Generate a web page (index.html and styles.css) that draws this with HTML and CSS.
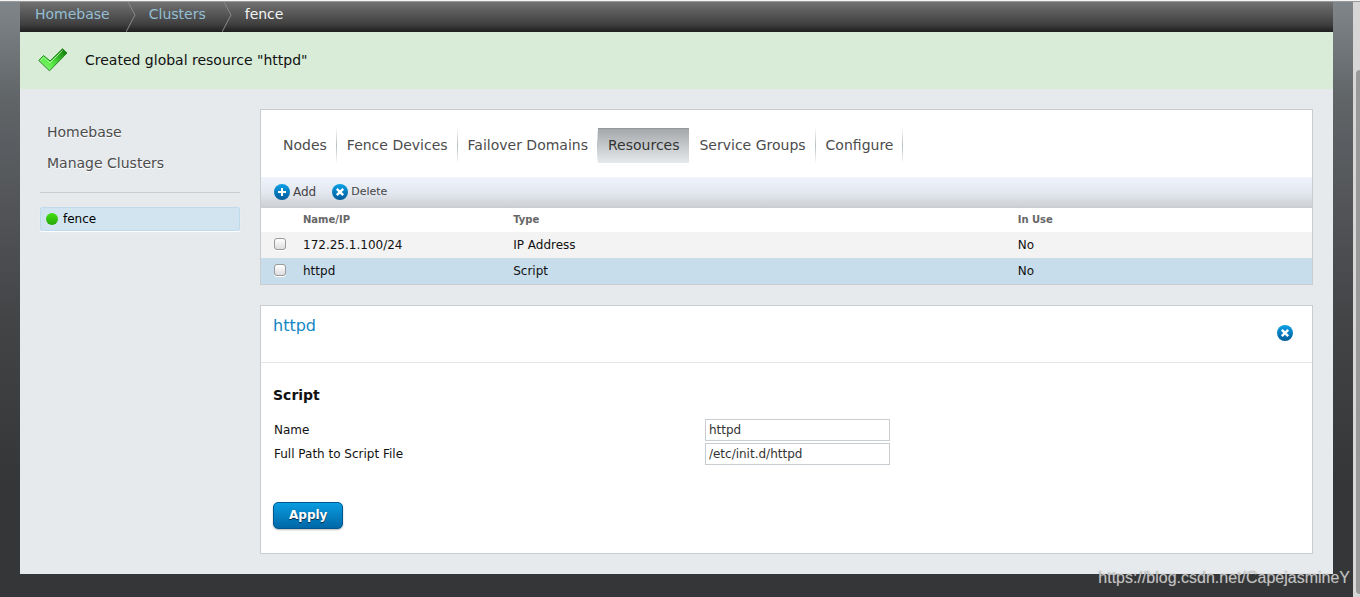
FILE: index.html
```html
<!DOCTYPE html>
<html lang="en">
<head>
<meta charset="utf-8">
<title>fence - Resources</title>
<link rel="stylesheet" href="styles.css">
</head>
<body>
<svg class="defs" width="0" height="0" aria-hidden="true">
  <defs>
    <linearGradient id="blue" x1="0" y1="0" x2="0" y2="1"><stop offset="0" stop-color="#0ba1e6"/><stop offset="1" stop-color="#015a98"/></linearGradient>
    <linearGradient id="green" x1="1" y1="0" x2="0" y2="1"><stop offset="0" stop-color="#0b6a08"/><stop offset=".3" stop-color="#2fae22"/><stop offset=".65" stop-color="#5df04a"/><stop offset="1" stop-color="#a5e89b"/></linearGradient>
    <symbol id="delete" viewBox="0 0 16 16"><circle cx="8" cy="8" r="8" fill="url(#blue)"/><path d="M4.8 4.8l6.4 6.4M11.2 4.8l-6.4 6.4" stroke="#fff" stroke-width="2.4"/></symbol>
    <symbol id="add" viewBox="0 0 16 16"><circle cx="8" cy="8" r="8" fill="url(#blue)"/><path d="M8 4v8M4 8h8" stroke="#fff" stroke-width="2"/></symbol>
  </defs>
</svg>
<div class="window">
  <div class="page">
    <nav class="crumbs" aria-label="Breadcrumb">
      <a href="#">Homebase</a>
      <svg class="chevron" viewBox="0 0 10 30"><path d="M2 0L9 13L0 30" fill="none" stroke="#8a8a8a"/></svg>
      <a href="#">Clusters</a>
      <svg class="chevron" viewBox="0 0 10 30"><path d="M2 0L9 13L0 30" fill="none" stroke="#8a8a8a"/></svg>
      <span>fence</span>
    </nav>
    <div class="notice" role="status">
      <svg class="check" viewBox="0 0 30 24"><path d="M0.8 12.5L5.5 7.5L12 13L24.5 0.8L29 5L11.5 22.8Z" fill="url(#green)" stroke="#248a1c"/><path d="M2.5 12.5L5.5 9.3L12 15L24.5 2.5" fill="none" stroke="#c5f5bd" stroke-width="1" opacity=".8"/></svg>
      <span>Created global resource "httpd"</span>
    </div>
    <div class="columns">
      <aside class="side">
        <nav class="side-links"><a href="#">Homebase</a><a href="#">Manage Clusters</a></nav>
        <a class="cluster" href="#"><i class="dot"></i>fence</a>
      </aside>
      <main class="main">
        <section class="card">
          <nav class="tabs">
            <a href="#">Nodes</a><a href="#">Fence Devices</a><a href="#">Failover Domains</a><a href="#" class="active" aria-current="page">Resources</a><a href="#">Service Groups</a><a href="#">Configure</a>
          </nav>
          <div class="toolbar">
            <button type="button" class="tool"><svg class="icon"><use href="#add"/></svg>Add</button>
            <button type="button" class="tool small"><svg class="icon"><use href="#delete"/></svg>Delete</button>
          </div>
          <table class="grid">
            <thead><tr><th class="pick"></th><th class="name">Name/IP</th><th class="type">Type</th><th>In Use</th></tr></thead>
            <tbody>
              <tr><td class="tick"><input type="checkbox" aria-label="Select 172.25.1.100/24"></td><td>172.25.1.100/24</td><td>IP Address</td><td>No</td></tr>
              <tr class="selected"><td class="tick"><input type="checkbox" aria-label="Select httpd"></td><td>httpd</td><td>Script</td><td>No</td></tr>
            </tbody>
          </table>
        </section>
        <section class="card">
          <header class="detail-head"><h2>httpd</h2><button type="button" class="close" aria-label="Close"><svg class="icon"><use href="#delete"/></svg></button></header>
          <form class="detail">
            <h3>Script</h3>
            <div class="fields">
              <label for="name">Name</label><input id="name" type="text" value="httpd">
              <label for="path">Full Path to Script File</label><input id="path" type="text" value="/etc/init.d/httpd">
            </div>
            <button type="button" class="apply">Apply</button>
          </form>
        </section>
      </main>
    </div>
  </div>
  <div class="scroll"><div class="thumb"></div></div>
</div>
<div class="watermark">https://blog.csdn.net/CapejasmineY</div>
</body>
</html>
```
FILE: styles.css
```css
* { box-sizing: border-box; }
body {
  margin: 0;
  font: 12px/16px "DejaVu Sans", sans-serif;
  color: #111;
  background: #353637;
}
a { color: inherit; text-decoration: none; }
button { font: inherit; color: inherit; border: 0; padding: 0; background: none; }
.defs { position: absolute; }
.window {
  display: flex;
  min-height: 100vh;
  border-top: 1px solid #f4f4f4;
  box-shadow: inset 0 1px #999;
  background: linear-gradient(#80868a 0, #606467 100px, #4e4f53 240px, #434446 320px, #353637 480px);
}
.page {
  flex: 1;
  margin: 1px 20px 23px;
  background: #e6eaed;
}
.crumbs {
  display: flex;
  height: 30px;
  padding: 0 15px;
  font-size: 14px;
  line-height: 24px;
  color: #f4f4f4;
  background: linear-gradient(#717171, #3f3f3f 75%, #1e1e1e);
}
.crumbs a { color: #93bfd5; }
.chevron { width: 10px; height: 30px; margin: 0 13px 0 16px; }
.notice {
  display: flex;
  align-items: center;
  gap: 17px;
  height: 57px;
  padding: 0 18px 2px;
  font-size: 14px;
  background: #d8ecd8;
}
.check { width: 30px; height: 24px; }
.columns { display: flex; gap: 20px; padding: 20px; }
.side { width: 200px; flex: none; }
.side-links {
  display: flex;
  flex-direction: column;
  gap: 15px;
  padding: 15px 7px 21px;
  margin-bottom: 14px;
  font-size: 14px;
  color: #4c4c4c;
  text-shadow: 0 1px #fff;
  border-bottom: 1px solid #c8cdd1;
}
.cluster {
  display: flex;
  align-items: center;
  gap: 5px;
  height: 24px;
  padding: 0 5px;
  color: #000;
  background: #d2e4f0;
  border: 1px solid #c0dbe9;
  border-radius: 2px;
  box-shadow: 0 1px 1px #fff;
}
.dot { width: 12px; height: 12px; border-radius: 50%; background: linear-gradient(#44e012, #27a808); }
.main { flex: 1; display: flex; flex-direction: column; gap: 20px; }
.card { background: #fff; border: 1px solid #c8cdd1; }
.tabs { display: flex; padding: 18px 12px 14px; font-size: 14px; line-height: 34px; color: #4c4c4c; }
.tabs a {
  height: 35px;
  padding: 0 9px 0 10px;
  border-right: 1px solid;
  border-image: linear-gradient(#fff, #b8c0c5 50%, #fff) 1;
}
.tabs .active {
  color: #333;
  border: 0;
  padding-right: 10px;
  background: linear-gradient(#a2a6a9, #e6eaed);
  box-shadow: inset 0 1px #92979a;
}
.toolbar {
  display: flex;
  gap: 16px;
  height: 31px;
  padding: 0 13px;
  color: #444;
  background: linear-gradient(#eff3fb, #e4e8f1 50%, #cdd1d4);
  border-bottom: 1px solid #c8cdd1;
}
.tool { display: flex; align-items: center; gap: 3px; }
.small { font-size: 11px; }
.icon { display: block; width: 16px; height: 16px; }
.grid { width: 100%; table-layout: fixed; border-collapse: collapse; }
.grid th { height: 24px; padding: 0; font-size: 10px; text-align: left; color: #666; }
.grid td { height: 26px; padding: 0; }
.grid .tick { padding-bottom: 2px; }
.pick { width: 42px; }
.name { width: 20%; }
.type { width: 48%; }
.grid tbody tr { background: #f3f3f3; }
.grid tbody .selected { background: #c8ddeb; }
.grid input {
  appearance: none;
  display: block;
  width: 12px;
  height: 12px;
  margin: 0 13px;
  border: 1px solid #999;
  border-radius: 3px;
  background: linear-gradient(#fff, #ddd);
  box-shadow: 0 1px #fff;
}
.detail-head {
  display: flex;
  justify-content: space-between;
  padding: 10px 19px 10px 12px;
  border-bottom: 1px solid #dfe5e9;
}
h2 { margin: 0; font-size: 16px; line-height: 20px; font-weight: 400; color: #1286c4; }
.close { height: 36px; padding-bottom: 2px; }
.detail { padding: 24px 12px; }
h3 { margin: 0 0 15px; font-size: 14px; line-height: 17px; }
.fields { display: grid; grid-template-columns: 42% 185px; row-gap: 2px; align-items: center; margin-bottom: 37px; padding-left: 1px; }
.fields input {
  height: 22px;
  padding: 0 3px;
  font: inherit;
  color: #333;
  border: 1px solid #c8cdd1;
  background: #fff;
}
.apply {
  display: block;
  height: 27px;
  padding: 0 15px 2px;
  font-size: 12px;
  font-weight: 700;
  color: #fff;
  text-shadow: 0 1px 1px #024;
  border: 1px solid #00578f;
  border-radius: 5px;
  background: linear-gradient(#0a9ce0, #0067a6);
  box-shadow: 0 1px 2px #bbb;
}
.scroll { width: 7px; flex: none; margin-top: 1px; padding: 68px 0 3px 3px; display: flex; background: #d6d6d6; }
.thumb { flex: 1; border-radius: 4px 0 0 4px; background: #999; }
.watermark {
  position: absolute;
  right: 10px;
  bottom: 9px;
  font: 16px/20px "Liberation Sans", Arial, sans-serif;
  color: rgba(255, 255, 255, .65);
  text-shadow: 0 0 1px #666;
}
```
